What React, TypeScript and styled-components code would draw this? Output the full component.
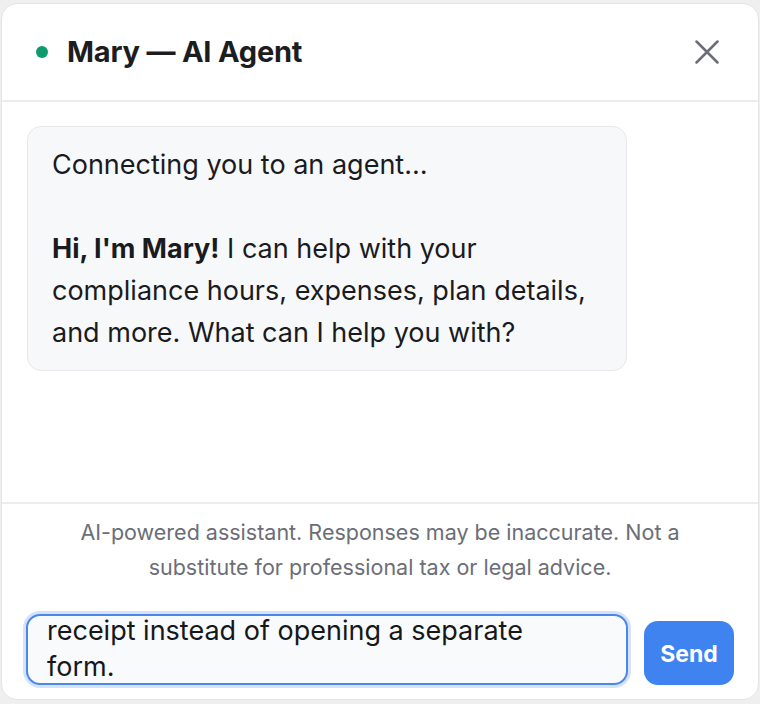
import React, { useEffect, useRef } from "react";
import styled, { createGlobalStyle } from "styled-components";

const GlobalStyle = createGlobalStyle`
  html, body {
    margin: 0;
    padding: 0;
    background: #efefef;
  }
  body {
    font-family: Inter, "Noto Sans", Arial, sans-serif;
    color: #1c1d21;
  }
`;

const Panel = styled.div`
  margin: 3px 1px 0 1px;
  height: 697px;
  box-sizing: border-box;
  background: #ffffff;
  border: 1px solid #e3e4e6;
  border-radius: 16px;
  display: flex;
  flex-direction: column;
  overflow: hidden;
`;

const Header = styled.header`
  height: 98px;
  flex-shrink: 0;
  box-sizing: border-box;
  border-bottom: 2px solid #ececee;
  display: flex;
  align-items: center;
  padding: 0 33px 0 34px;
`;

const StatusDot = styled.span`
  width: 12px;
  height: 12px;
  border-radius: 50%;
  background: #0e9a6a;
  margin-right: 19px;
  flex-shrink: 0;
`;

const Title = styled.h1`
  margin: 0 0 2px;
  flex: 1;
  font-size: 29px;
  font-weight: 700;
  letter-spacing: -0.2px;
  color: #1c1d21;
`;

const CloseButton = styled.button`
  border: 0;
  background: transparent;
  padding: 0;
  width: 36px;
  height: 36px;
  display: flex;
  align-items: center;
  justify-content: center;
  color: #6b6e76;
  cursor: pointer;
`;

const Messages = styled.div`
  flex: 1;
  padding: 24px 25px;
  display: flex;
  flex-direction: column;
  align-items: flex-start;
`;

const Bubble = styled.div`
  max-width: 85%;
  box-sizing: border-box;
  background: #f7f8fa;
  border: 1px solid #e6e8eb;
  border-radius: 14px;
  padding: 17px 26px 16px 24px;
  font-size: 27px;
  line-height: 42px;
  color: #1a1b1e;

  p {
    margin: 0;
  }
  p + p {
    margin-top: 42px;
  }
  strong {
    font-weight: 700;
  }
`;

const Footer = styled.footer`
  flex-shrink: 0;
  border-top: 2px solid #ececee;
  padding: 11px 24px 14px;
  display: flex;
  flex-direction: column;
  gap: 29px;
`;

const Disclaimer = styled.p`
  margin: 0;
  padding: 0 40px;
  text-align: center;
  font-size: 21.5px;
  line-height: 35px;
  color: #6b6e76;
`;

const Composer = styled.div`
  display: flex;
  align-items: flex-end;
  gap: 16px;
`;

const Input = styled.textarea`
  flex: 1;
  height: 71px;
  box-sizing: border-box;
  resize: none;
  overflow: hidden;
  border: 2px solid #4a87ea;
  border-radius: 14px;
  box-shadow: 0 0 0 3px #d4e3fb;
  background: #f9fafb;
  padding: 10px 75px 0 19px;
  font-family: inherit;
  font-size: 27px;
  line-height: 36px;
  color: #16171a;
  outline: none;
`;

const SendButton = styled.button`
  width: 90px;
  height: 64px;
  border: 0;
  border-radius: 14px;
  background: #3e83f0;
  color: #ffffff;
  font-family: inherit;
  font-size: 23px;
  font-weight: 700;
  padding-top: 3px;
  cursor: pointer;
`;

const CloseIcon = () => (
  <svg width="24" height="24" viewBox="0 0 24 24" fill="none">
    <path
      d="M1.5 1.5 L22.5 22.5 M22.5 1.5 L1.5 22.5"
      stroke="currentColor"
      strokeWidth="2.5"
      strokeLinecap="round"
    />
  </svg>
);

const draft =
  "Would it be possible to attach the receipt instead of opening a separate form.";

export default function App() {
  const inputRef = useRef<HTMLTextAreaElement>(null);

  useEffect(() => {
    // show the tail of the draft, last line sitting on the bottom edge
    const el = inputRef.current;
    if (el) el.scrollTop = el.scrollHeight - el.clientHeight - 2;
  }, []);

  return (
    <>
      <GlobalStyle />
      <Panel>
        <Header>
          <StatusDot />
          <Title>Mary — AI Agent</Title>
          <CloseButton aria-label="Close">
            <CloseIcon />
          </CloseButton>
        </Header>
        <Messages>
          <Bubble>
            <p>Connecting you to an agent…</p>
            <p>
              <strong>Hi, I'm Mary!</strong> I can help with your compliance
              hours, expenses, plan details, and more. What can I help you
              with?
            </p>
          </Bubble>
        </Messages>
        <Footer>
          <Disclaimer>
            AI-powered assistant. Responses may be inaccurate. Not a substitute
            for professional tax or legal advice.
          </Disclaimer>
          <Composer>
            <Input ref={inputRef} defaultValue={draft} />
            <SendButton>Send</SendButton>
          </Composer>
        </Footer>
      </Panel>
    </>
  );
}
